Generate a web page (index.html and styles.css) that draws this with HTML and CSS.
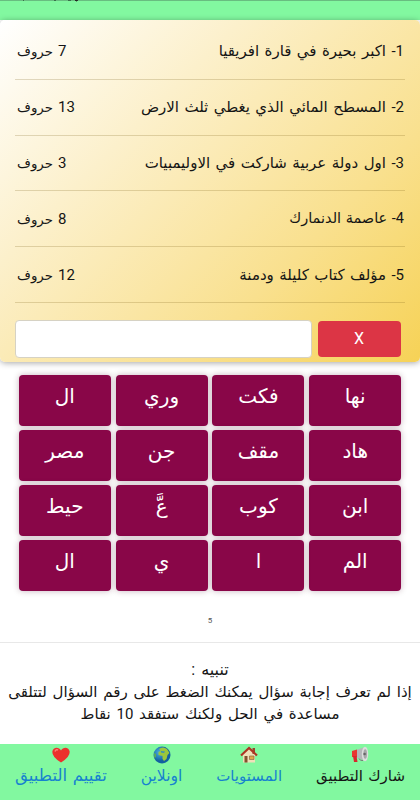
FILE: index.html
```html
<!DOCTYPE html>
<html lang="ar" dir="rtl">
<head>
<meta charset="utf-8">
<title>كلمات</title>
<link rel="stylesheet" href="styles.css">
</head>
<body>
<header class="top"><svg class="tail" viewBox="0 0 60 3"><path d="M53 0q1 2 3 0" stroke="#222" fill="#222"/><path d="M1 .5h1M32 .5h2M46 .5h3" stroke="#3b6f4b" fill="none"/></svg></header>
<section class="card">
<ul class="questions">
<li><span>1- اكبر بحيرة في قارة افريقيا</span><span class="count"><span class="num">7</span> حروف</span></li>
<li><span>2- المسطح المائي الذي يغطي ثلث الارض</span><span class="count"><span class="num">13</span> حروف</span></li>
<li><span>3- اول دولة عربية شاركت في الاوليمبيات</span><span class="count"><span class="num">3</span> حروف</span></li>
<li><span class="short">4- عاصمة الدنمارك</span><span class="count"><span class="num">8</span> حروف</span></li>
<li><span>5- مؤلف كتاب كليلة ودمنة</span><span class="count"><span class="num">12</span> حروف</span></li>
</ul>
<div class="answer"><button class="clear">X</button><input class="entry" type="text"></div>
</section>
<main class="tiles">
<button>نها</button><button>فكت</button><button>وري</button><button>ال</button>
<button>هاد</button><button>مقف</button><button>جن</button><button>مصر</button>
<button>ابن</button><button>كوب</button><button>عَّ</button><button>حيط</button>
<button>الم</button><button>ا</button><button>ي</button><button>ال</button>
</main>
<p class="level">5</p>
<section class="note"><p class="title">تنبيه :</p><p>إذا لم تعرف إجابة سؤال يمكنك الضغط على رقم السؤال لتتلقى</p><p>مساعدة في الحل ولكنك ستفقد 10 نقاط</p></section>
<nav class="bar">
<a class="share"><svg viewBox="0 0 18 18"><path d="M5 4L14 1v14l-9-4z" fill="#b4b6b8"/><path d="M1 5l5-1.500v8L1 11z" fill="#e8352f"/><path d="M2 10h3.500l1 6H3z" fill="#d8262c"/><ellipse cx="14" cy="8" rx="3.200" ry="7.300" fill="#dcdddd"/><ellipse cx="14.200" cy="8" rx="1.800" ry="4.800" fill="#a5a7a8"/><circle cx="13.600" cy="8" r="1.300" fill="#666"/><path d="M8 12.500q1 2.500 4 2" stroke="#777" fill="none"/></svg><span>شارك التطبيق</span></a>
<a class="levels"><svg viewBox="0 0 18 18"><path d="M3 8l6-6 6 6v8.500H3z" fill="#f0dfb9"/><path d="M12.500 2H15v6h-2.500z" fill="#98452c"/><path d="M1 9.500l8-7.500 8 7.500" fill="none" stroke="#ad3524" stroke-width="2.200"/><path d="M4.500 10h3v6.500h-3z" fill="#84502e"/><path d="M9.500 10h4.500v3.500H9.500z" fill="#e0a64b" stroke="#8b6843" stroke-width=".7"/></svg><span>المستويات</span></a>
<a class="online"><svg viewBox="0 0 18 18"><defs><radialGradient id="sea" cx=".35" cy=".35"><stop offset="0" stop-color="#4cb0dd"/><stop offset="1" stop-color="#1260a0"/></radialGradient></defs><circle cx="9" cy="9" r="8.500" fill="url(#sea)"/><path d="M6 3q4-3 8 0l2.500 4-2 2-1 4-2.500 2-1.500-2v-3l-4-1 0-3 2-1z" fill="#9bc63c"/><path d="M8 5l4 .5-1 1.500-3-.5z" fill="#3190bf"/><path d="M1 7l2 1 0 3-1.500 1z" fill="#5bae55"/></svg><span>اونلاين</span></a>
<a class="rate"><svg viewBox="0 0 18 18"><path d="M9 16.500Q0 11 .3 5.800C1 .8 6.800.3 9 4.500 11.200.3 17 .8 17.700 5.800Q18 11 9 16.500z" fill="#ec312c"/><path d="M3 5.500q1-2.500 3-1.500" stroke="#ff8177" stroke-width="1.500" fill="none"/></svg><span>تقييم التطبيق</span></a>
</nav>
</body>
</html>
```
FILE: styles.css
```css
* { box-sizing: border-box; }
body { margin: 0; height: 800px; overflow: hidden; display: flex; flex-direction: column; background: #fff; color: #151515; font-family: Roboto, "DejaVu Sans", sans-serif; }
p, ul { margin: 0; padding: 0; }
button, input { font: inherit; border: 0; margin: 0; }
.top { height: 20px; flex: none; background: #82f8a0; border-top: 1px solid #68bd80; direction: ltr; }
.tail { display: block; width: 60px; height: 3px; margin: -1px 0 0 22px; }
.card { height: 342px; flex: none; padding: 4px 15px 0; border-radius: 5px; background: linear-gradient(135deg, #fff 0%, #fcf0cb 32%, #f9e08e 70%, #f6d256 100%); box-shadow: 0 1px 6px rgba(0,0,0,.35); }
.questions { list-style: none; }
.questions li { height: 55.8px; display: flex; align-items: center; justify-content: space-between; border-bottom: 1px solid rgba(120,90,20,.22); font-size: 15px; padding: 0 1px 0 2px; white-space: nowrap; word-spacing: 1.700px; }
.count { font-size: 13.400px; }
.num { font-size: 15px; }
.short { font-size: 14.500px; word-spacing: 1px; }
.answer { display: flex; gap: 6px; padding: 17px 4.500px 0 0; align-items: center; }
.clear { width: 83px; height: 36px; border-radius: 4px; background: #dc3545; color: #fff; font: 16px Roboto, sans-serif; }
.entry { flex: 1; min-width: 0; height: 38px; border-radius: 4px; background: #fff; border: 1px solid #d6d2c4; }
.tiles { flex: none; display: grid; grid-template-columns: repeat(4, 92px); grid-auto-rows: 51px; gap: 4px 4.800px; margin: 12.500px 18.800px 0; }
.tiles button { border-radius: 4px; background: #890648; color: #fff; font-size: 20px; line-height: 24px; padding: 0 0 8px; box-shadow: 0 0 6px rgba(70,0,40,.3); }
.level { margin-top: 24px; height: 28px; text-align: center; font: 8px/12px Roboto, sans-serif; color: #555; }
.note { border-top: 1.500px solid #e8e8e8; height: 102px; padding-top: 16px; text-align: center; font-size: 15px; line-height: 22px; white-space: nowrap; flex: none; word-spacing: 2px; }
.title { font-size: 16px; }
.bar { height: 56px; flex: none; margin-top: auto; background: #82f8a0; display: flex; justify-content: space-between; padding: 2px 15px 0; color: #1682cf; font-size: 15px; word-spacing: 1.500px; }
.bar a { display: flex; flex-direction: column; align-items: center; white-space: nowrap; }
.bar svg { width: 18px; height: 18px; }
.bar span { line-height: 24px; }
.share { color: #151515; }
.online { font-size: 15.600px; }
.rate { font-size: 16.600px; }
```
